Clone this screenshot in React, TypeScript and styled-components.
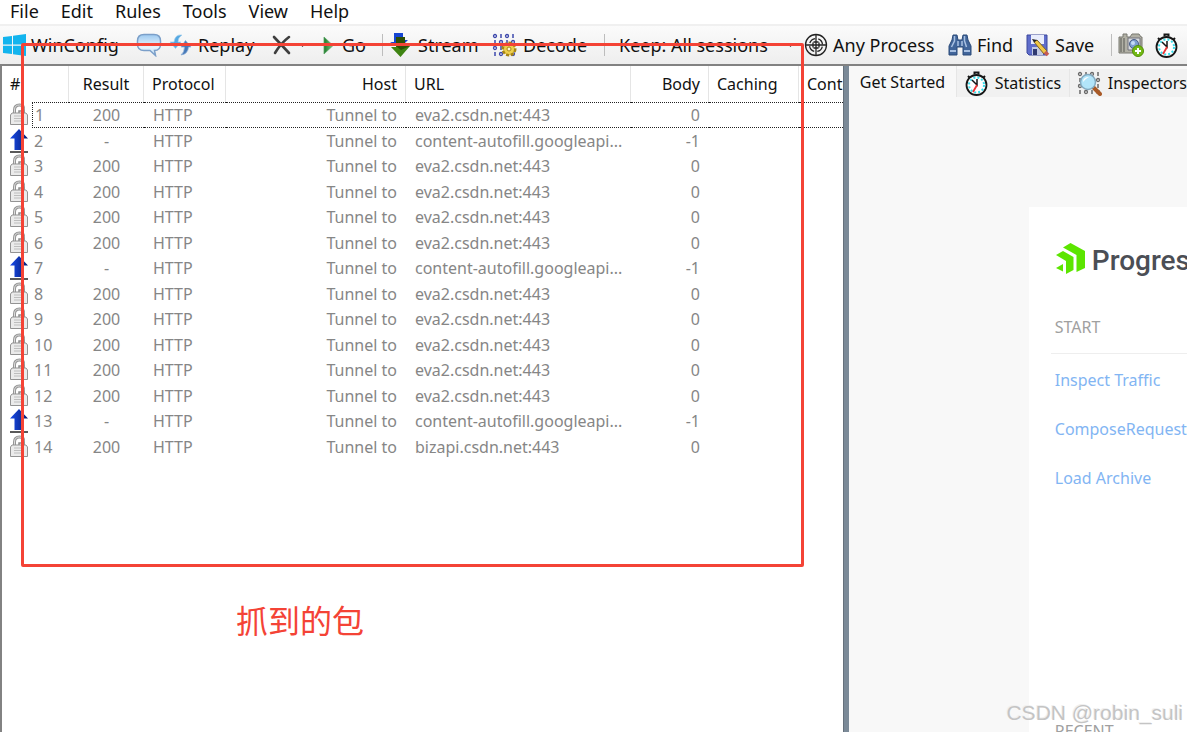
import React from "react";
import styled, { createGlobalStyle } from "styled-components";

const GlobalStyle = createGlobalStyle`
  * { box-sizing: border-box; }
  body { margin: 0; background: #fff; font-family: "Noto Sans", "Noto Sans CJK SC", sans-serif; color: #111; }
  button, select { font: inherit; color: inherit; background: none; border: 0; margin: 0; padding: 0; }
`;

const Window = styled.div`
  position: relative;
  display: flex;
  flex-direction: column;
  height: 100vh;
  overflow: hidden;
`;

const MenuBar = styled.nav`
  display: flex;
  align-items: flex-start;
  height: 24px;
  flex: none;
  padding-left: 10px;
  gap: 22px;
  font-size: 18px;
  line-height: 22px;
`;

const MenuItem = styled.button`
  white-space: nowrap;
`;

const ToolBar = styled.div`
  display: flex;
  align-items: center;
  flex: none;
  height: 42px;
  padding-left: 2px;
  background: linear-gradient(#fbfbfb, #eeeeee);
  border-top: 2px solid #f0f0f0;
  border-bottom: 2px solid #828282;
  font-size: 18px;
  line-height: 24px;
`;

const Tool = styled.button<{ $width: number }>`
  display: flex;
  align-items: center;
  flex: none;
  gap: 5px;
  width: ${(p) => p.$width}px;
  white-space: nowrap;
  svg { flex: none; }
`;

const Separator = styled.span`
  flex: none;
  width: 1px;
  height: 22px;
  margin-right: 6px;
  background: #bdbdbd;
`;

const KeepBox = styled.div`
  display: flex;
  align-items: center;
  flex: none;
  width: 193px;
  padding-left: 8px;
`;

const KeepSelect = styled.select`
  appearance: none;
  width: 168px;
  font-size: 18px;
`;

const Body = styled.main`
  display: flex;
  flex: 1;
  min-height: 0;
`;

const SessionPane = styled.section`
  flex: 0 0 71%;
  overflow: hidden;
  border-left: 2px solid #828282;
  background: #fff;
`;

const SessionTable = styled.table`
  table-layout: fixed;
  width: 885px;
  border-collapse: separate;
  border-spacing: 0;
  font-size: 16px;
  line-height: 20px;
`;

const HeadCell = styled.th<{ $align?: string }>`
  height: 36px;
  padding: 0 8px;
  border-right: 1px solid #e5e5e5;
  font-weight: 400;
  text-align: ${(p) => p.$align ?? "left"};
  white-space: nowrap;
`;

const Row = styled.tr`
  height: 26px;
  color: #868686;
  &:nth-child(even) { height: 25px; }
`;

const Cell = styled.td<{ $align?: string; $focus?: boolean }>`
  padding: 0 9px;
  text-align: ${(p) => p.$align ?? "left"};
  white-space: nowrap;
  overflow: hidden;
  border: 0 dotted #222;
  border-width: ${(p) => (p.$focus ? "1px 0" : "0")};
`;

const NumberCell = styled.td`
  padding: 0 0 0 7px;
`;

const NumberBox = styled.div<{ $tall: boolean }>`
  display: flex;
  align-items: center;
  height: ${(p) => (p.$tall ? 26 : 25)}px;
  gap: 3px;
`;

const Num = styled.span<{ $focus: boolean }>`
  display: flex;
  align-items: center;
  flex: 1;
  height: 100%;
  padding-left: 2px;
  border: 0 dotted #222;
  border-width: ${(p) => (p.$focus ? "1px 0 1px 1px" : "0")};
`;

const Splitter = styled.div`
  flex: none;
  width: 6px;
  background: #7b8a98;
  border-left: 1px solid #66717c;
`;

const SidePane = styled.section`
  display: flex;
  flex-direction: column;
  flex: 1;
  min-width: 0;
  overflow: hidden;
  background: #f8f8f8;
`;

const Tabs = styled.div`
  display: flex;
  align-items: flex-end;
  flex: none;
  height: 31px;
  font-size: 16px;
  line-height: 20px;
`;

const Tab = styled.button<{ $width: number; $active?: boolean }>`
  display: flex;
  align-items: center;
  flex: none;
  gap: 6px;
  width: ${(p) => p.$width}px;
  height: ${(p) => (p.$active ? 31 : 28)}px;
  padding-left: ${(p) => (p.$active ? 11 : 7)}px;
  border-right: 1px solid #e6e6e6;
  background: ${(p) => (p.$active ? "#f8f8f8" : "#f1f1f1")};
  white-space: nowrap;
`;

const StartArea = styled.div`
  display: flex;
  flex: 1;
  padding: 110px 0 0 180px;
`;

const StartCard = styled.div`
  flex: 1;
  min-width: 0;
  padding: 30px 0 0 22px;
  background: #fff;
  white-space: nowrap;
`;

const Brand = styled.div`
  display: flex;
  align-items: center;
  gap: 6px;
  height: 48px;
  padding-left: 4px;
  font: 500 28px/36px Roboto, sans-serif;
  color: #4b4e55;
  svg { flex: none; margin-bottom: 6px; }
`;

const Heading = styled.h2`
  margin: 0;
  padding: 0 0 0 4px;
  font-size: 16px;
  font-weight: 400;
  line-height: 20px;
  color: #a0a0a0;
`;

const StartHeading = styled(Heading)`
  margin-top: 32px;
  height: 37px;
  border-bottom: 1px solid #eeeeee;
`;

const Links = styled.ul`
  display: flex;
  flex-direction: column;
  gap: 29px;
  margin: 0;
  padding: 16px 0 0 4px;
  height: 367px;
  list-style: none;
  font-size: 16px;
  line-height: 20px;
`;

const StartLink = styled.a`
  color: #82b5f3;
  text-decoration: none;
`;

const Highlight = styled.div`
  position: absolute;
  left: 21px;
  top: 43px;
  width: 783px;
  height: 524px;
  border: 3px solid #f44336;
  border-radius: 2px;
  pointer-events: none;
`;

const Note = styled.p`
  position: absolute;
  left: 236px;
  top: 595px;
  margin: 0;
  font: 32px/48px "Noto Sans CJK SC", sans-serif;
  color: #f44336;
`;

const Watermark = styled.p`
  position: absolute;
  right: 4px;
  bottom: 6px;
  margin: 0;
  font: 21px/26px "Liberation Sans", sans-serif;
  color: #c4c4c4;
  text-shadow: -1px -1px 0 #f0f0f0;
`;

const Svg = ({ w = 24, h = 24, children }: { w?: number; h?: number; children: React.ReactNode }) => (
  <svg width={w} height={h} viewBox={`0 0 ${w} ${h}`} aria-hidden="true">{children}</svg>
);

const WinIcon = () => (
  <Svg><path fill="#12b4ee" d="M1 4 10 3v8.500H1zM11 2.800 24 1v10.500H11zM1 12.700h9V21l-9-1zM11 12.700h13V23l-13-1.800z" /></Svg>
);
const BubbleIcon = () => (
  <Svg w={26}>
    <defs><linearGradient id="bub" x2="0" y2="1"><stop stopColor="#9cc9f0" /><stop offset=".6" stopColor="#eaf5fe" /><stop offset="1" stopColor="#bcdcf5" /></linearGradient></defs>
    <path d="M8 1.500h10q6.500 0 6.500 6.500v3q0 6.500-6 6.500l1 5-5.500-5H8q-6.500 0-6.500-6.500V8Q1.500 1.500 8 1.500z" fill="url(#bub)" stroke="#7b9fc9" strokeWidth="1.500" />
  </Svg>
);
const ReplayIcon = () => (
  <Svg>
    <path d="M13 2Q6 1 5 9H1l5.500 6.500L12 9H9Q9 4.500 13 2z" fill="#55a8e2" stroke="#9fcdec" strokeWidth=".7" />
    <path d="M12 22q7-1 7.500-8H22l-5.500-6.500L12 14h3.500q0 5-3.500 8z" fill="#4679b8" stroke="#86aad6" strokeWidth=".7" />
  </Svg>
);
const CrossIcon = () => (
  <Svg><path d="m4 4 15 16M19 4Q11 10 5 20" stroke="#3f3f3f" strokeWidth="2.600" fill="none" strokeLinecap="round" /></Svg>
);
const Caret = () => <Svg w={9} h={6}><path d="M0 1h7L3.500 5z" fill="#333" /></Svg>;
const GoIcon = () => (
  <Svg w={18}>
    <defs><linearGradient id="go"><stop stopColor="#1f7a2b" /><stop offset="1" stopColor="#7cc884" /></linearGradient></defs>
    <path d="M5 4v17l9-8.500z" fill="url(#go)" stroke="#5aa564" strokeWidth=".8" />
  </Svg>
);
const StreamIcon = () => (
  <Svg>
    <path d="M5 0h9v7h5l-8 8-10-6h4z" fill="#1746d2" />
    <path d="M7 4h9v9h5L11.500 24 2 14h5z" fill="#3f8412" />
    <path d="M7 4h9v9h5l-9 4-5-4z" fill="#2f4f06" />
  </Svg>
);
const Dots = ({ rows, color }: { rows: number[]; color: string }) => (
  <>
    {rows.map((y, r) => [3, 9, 15, 21].map((x, c) => (r + c) % 2
      ? <path key={`${x}-${y}`} d={`M${x} ${y - 2}v4`} stroke={color} strokeWidth="1.500" />
      : <circle key={`${x}-${y}`} cx={x} cy={y} r="1.500" fill="none" stroke={color} strokeWidth="1.300" />))}
  </>
);
const DecodeIcon = () => (
  <Svg w={26}>
    <Dots rows={[3, 9, 15, 21]} color="#3d48ac" />
    <circle cx="17" cy="16" r="6" fill="#e9c53d" stroke="#a88514" strokeWidth="3" strokeDasharray="3 1.500" />
    <circle cx="17" cy="16" r="5" fill="#edcf4d" /><circle cx="17" cy="16" r="2" fill="#fff8d0" stroke="#a88514" />
  </Svg>
);
const TargetIcon = () => (
  <Svg>
    <g fill="none" stroke="#222" strokeWidth="1.300">
      <circle cx="12" cy="12" r="10.500" /><circle cx="12" cy="12" r="6.500" strokeDasharray="7 3.200" strokeDashoffset="-1.600" />
      <path d="M12 1v22M1 12h22M9 9.500v5M15 9.500v5M9.500 9h5M9.500 15h5" />
    </g>
  </Svg>
);
const FindIcon = () => (
  <Svg>
    <path d="M5 2h4l1 5h4l1-5h4l1 5 3 6v9h-8v-8H9v8H1v-9l3-6z" fill="#41659a" stroke="#2b4a79" />
    <path d="M6.500 3v5l-3 6M16.500 3v5l2 6M10 8v5M14 8v5" stroke="#a9c1e2" strokeWidth="1.500" fill="none" />
    <path d="M2 18h6M16 18h6" stroke="#a9c1e2" strokeWidth="2" />
  </Svg>
);
const SaveIcon = () => (
  <Svg>
    <path d="M1 2h20v20H3l-2-2z" fill="#5f6dcb" stroke="#3d489c" />
    <path d="M5 2h13v9H5z" fill="#e9edfc" /><path d="M6 14h11v8H6z" fill="#c2c9e2" /><path d="M7 16h4v6H7z" fill="#303a70" />
    <path d="m8 9 3-2 10 11-3 3z" fill="#f0c644" stroke="#79612a" /><path d="m19 19 3 3" stroke="#c75c50" strokeWidth="3.500" /><path d="m6 6 5 1-3 2.500z" fill="#222" />
  </Svg>
);
const CameraIcon = () => (
  <Svg w={26}>
    <path d="M1 4h4V1h4v3h3l2-3h7l2 3h1v16H1z" fill="#b1b0a5" stroke="#797971" />
    <path d="M3 5v14M6 5v14" stroke="#76766f" strokeWidth="1.500" />
    <path d="M10 5h12v12H10z" fill="#d9dce0" stroke="#73737a" /><circle cx="16" cy="11" r="4.500" fill="#7d9ed1" stroke="#4a5f88" /><circle cx="15" cy="10" r="2" fill="#c4dcf7" />
    <circle cx="20" cy="18" r="5.500" fill="#72b914" stroke="#549008" /><path d="M17 18h6M20 15v6" stroke="#fff" strokeWidth="2" />
  </Svg>
);
const ClockIcon = () => (
  <Svg w={25} h={25}>
    <path d="M10.500 3.500v-2h4v2M4 5l2 2M21 5l-2 2" stroke="#161616" strokeWidth="2" fill="none" />
    <circle cx="12.500" cy="14" r="10" fill="#fff" stroke="#161616" strokeWidth="1.800" />
    <circle cx="12.500" cy="14" r="7.500" fill="none" stroke="#38dcea" strokeWidth="2" strokeDasharray="2 2" />
    <path d="m8 9 5 5V8" stroke="#151515" strokeWidth="1.500" fill="none" /><path d="m13 14-4 7" stroke="#ed3535" strokeWidth="1.800" />
  </Svg>
);
const InspectIcon = () => (
  <Svg w={25} h={25}>
    <Dots rows={[3, 9, 15, 21]} color="#686868" />
    <path d="m16 16 7 7" stroke="#a95a27" strokeWidth="4" strokeLinecap="round" />
    <circle cx="11" cy="11" r="7.500" fill="#b2e5fa" stroke="#83a9bf" strokeWidth="1.500" /><path d="M6 11q0-5 6-5-4 2-6 5z" fill="#fff" />
  </Svg>
);
const LockIcon = () => (
  <Svg w={20}>
    <path d="M5.500 10V7q0-5 5-5t4 5v3" fill="none" stroke="#969696" strokeWidth="3" /><path d="M5.500 10V7q0-5 5-5t4 5v3" fill="none" stroke="#dddddd" />
    <path d="M10 11V8h4" fill="none" stroke="#8c8c8c" strokeWidth="1.500" />
    <path d="m3 10-1.500 2v9.500h17V12L17 10z" fill="#ebebeb" stroke="#939393" /><path d="M5 13h10M5 15.500h10M5 18h10" stroke="#bdbdbd" />
  </Svg>
);
const UpIcon = () => (
  <Svg w={20}>
    <defs><linearGradient id="up"><stop stopColor="#184bed" /><stop offset="1" stopColor="#061c70" /></linearGradient></defs>
    <path d="m10 0 9 9.500h-4.500V21h-9V9.500H1z" fill="url(#up)" /><path d="M1 23h18" stroke="#222" strokeWidth="1.500" />
  </Svg>
);
const BrandIcon = () => (
  <Svg w={31} h={32}>
    <path fill="#5ce500" d="M8 5.500 15.500 1 30 9v17l-8.500 4V13zM1 13l7-4 10.500 6v13L11 32V19zM1 26l7-4v7.500z" />
  </Svg>
);

const kinds = ["eva", "auto", "eva", "eva", "eva", "eva", "auto", "eva", "eva", "eva", "eva", "eva", "auto", "biz"];
const hosts: Record<string, string> = {
  eva: "eva2.csdn.net:443",
  auto: "content-autofill.googleapi...",
  biz: "bizapi.csdn.net:443",
};
const columns = [67, 75, 82, 180, 225, 78, 90, 88];

export default function App() {
  return (
    <Window>
      <GlobalStyle />
      <MenuBar>
        {["File", "Edit", "Rules", "Tools", "View", "Help"].map((m) => <MenuItem key={m}>{m}</MenuItem>)}
      </MenuBar>
      <ToolBar>
        <Tool $width={134}><WinIcon />WinConfig</Tool>
        <Tool $width={33} aria-label="Comment"><BubbleIcon /></Tool>
        <Tool $width={101}><ReplayIcon />Replay</Tool>
        <Tool $width={49} aria-label="Remove"><CrossIcon /><Caret /></Tool>
        <Tool $width={63}><GoIcon />Go</Tool>
        <Separator />
        <Tool $width={103}><StreamIcon />Stream</Tool>
        <Tool $width={112}><DecodeIcon />Decode</Tool>
        <Separator />
        <KeepBox>
          <KeepSelect aria-label="Keep sessions"><option>Keep: All sessions</option></KeepSelect>
          <Caret />
        </KeepBox>
        <Tool $width={144}><TargetIcon />Any Process</Tool>
        <Tool $width={78}><FindIcon />Find</Tool>
        <Tool $width={85}><SaveIcon />Save</Tool>
        <Separator />
        <Tool $width={36} aria-label="Screenshot"><CameraIcon /></Tool>
        <Tool $width={26} aria-label="Timer"><ClockIcon /></Tool>
      </ToolBar>
      <Body>
        <SessionPane>
          <SessionTable>
            <colgroup>{columns.map((w, i) => <col key={i} style={{ width: w }} />)}</colgroup>
            <thead>
              <tr>
                <HeadCell>#</HeadCell>
                <HeadCell $align="center">Result</HeadCell>
                <HeadCell>Protocol</HeadCell>
                <HeadCell $align="right">Host</HeadCell>
                <HeadCell>URL</HeadCell>
                <HeadCell $align="right">Body</HeadCell>
                <HeadCell>Caching</HeadCell>
                <HeadCell>Content</HeadCell>
              </tr>
            </thead>
            <tbody>
              {kinds.map((kind, i) => {
                const focus = i === 0;
                const auto = kind === "auto";
                return (
                  <Row key={i}>
                    <NumberCell>
                      <NumberBox $tall={i % 2 === 0}>{auto ? <UpIcon /> : <LockIcon />}<Num $focus={focus}>{i + 1}</Num></NumberBox>
                    </NumberCell>
                    <Cell $focus={focus} $align="center">{auto ? "-" : "200"}</Cell>
                    <Cell $focus={focus}>HTTP</Cell>
                    <Cell $focus={focus} $align="right">Tunnel to</Cell>
                    <Cell $focus={focus}>{hosts[kind]}</Cell>
                    <Cell $focus={focus} $align="right">{auto ? "-1" : "0"}</Cell>
                    <Cell $focus={focus} />
                    <Cell $focus={focus} />
                  </Row>
                );
              })}
            </tbody>
          </SessionTable>
        </SessionPane>
        <Splitter />
        <SidePane>
          <Tabs role="tablist">
            <Tab role="tab" aria-selected="true" $active $width={108}>Get Started</Tab>
            <Tab role="tab" $width={113}><ClockIcon />Statistics</Tab>
            <Tab role="tab" $width={130}><InspectIcon />Inspectors</Tab>
          </Tabs>
          <StartArea>
            <StartCard>
              <Brand><BrandIcon />Progress</Brand>
              <StartHeading>START</StartHeading>
              <Links>
                <li><StartLink href="#inspect">Inspect Traffic</StartLink></li>
                <li><StartLink href="#compose">ComposeRequest</StartLink></li>
                <li><StartLink href="#load">Load Archive</StartLink></li>
              </Links>
              <Heading>RECENT</Heading>
            </StartCard>
          </StartArea>
        </SidePane>
      </Body>
      <Highlight />
      <Note>抓到的包</Note>
      <Watermark>CSDN @robin_suli</Watermark>
    </Window>
  );
}
